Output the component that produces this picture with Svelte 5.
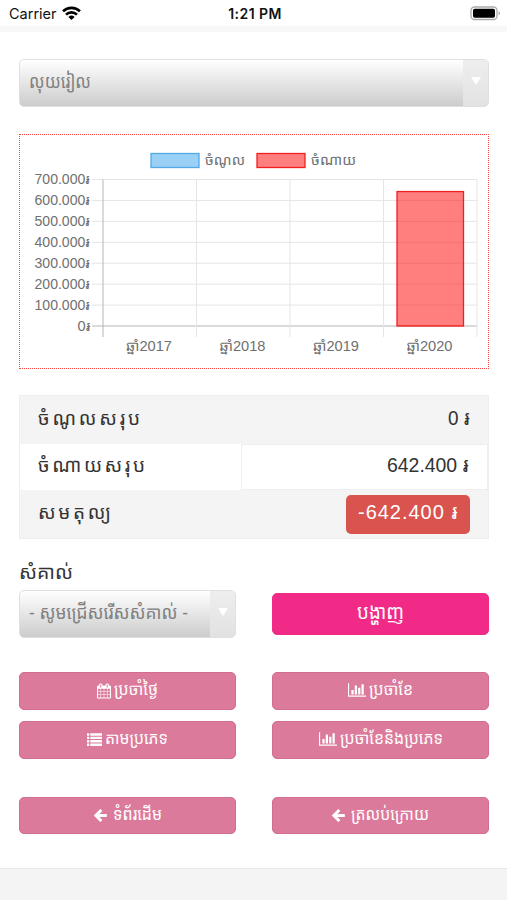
<script lang="ts">
	interface Action {
		icon: 'calendar' | 'chart' | 'list' | 'back';
		label: string;
		width: number;
	}

	const legend = [
		{ label: 'ចំណូល', level: 'income', x: 131, width: 40 },
		{ label: 'ចំណាយ', level: 'expense', x: 237, width: 45 }
	];

	const years = [2017, 2018, 2019, 2020];
	const ticks = ['700.000', '600.000', '500.000', '400.000', '300.000', '200.000', '100.000', '0'];
	const expenses = [0, 0, 0, 642400];

	const plot = { left: 83, top: 44.5, bottom: 191, step: 93.5 };
	const rowStep = (plot.bottom - plot.top) / 7;

	function barHeight(value: number) {
		return (value / 700000) * (plot.bottom - plot.top);
	}

	const actions: Action[] = [
		{ icon: 'calendar', label: 'ប្រចាំថ្ងៃ', width: 44 },
		{ icon: 'chart', label: 'ប្រចាំខែ', width: 44 },
		{ icon: 'list', label: 'តាមប្រភេទ', width: 63 },
		{ icon: 'chart', label: 'ប្រចាំខែនិងប្រភេទ', width: 103 }
	];

	const links: Action[] = [
		{ icon: 'back', label: 'ទំព័រដើម', width: 49 },
		{ icon: 'back', label: 'ត្រលប់ក្រោយ', width: 78 }
	];
</script>

{#snippet fitted(text: string, width: number, size: number, adjust: 'spacing' | 'spacingAndGlyphs' = 'spacingAndGlyphs')}
	<svg class="fitted" {width} height={size * 2}>
		<text y={size * 1.25} font-size={size} textLength={width} lengthAdjust={adjust}>{text}</text>
	</svg>
{/snippet}

{#snippet button(action: Action)}
	<button class="btn">
		{#if action.icon === 'calendar'}
			<svg class="icon" width="14" height="16" viewBox="0 0 1664 1792">
				<path
					fill="currentColor"
					d="M128 1664h288v-288H128zm352 0h320v-288H480zm-352-352h288V992H128zm352 0h320V992H480zM128 928h288V640H128zm736 736h320v-288H864zM480 928h320V640H480zm768 736h288v-288h-288zm-384-352h320V992H864zM512 448V160q0-13-9.500-22.500T480 128h-64q-13 0-22.500 9.500T384 160v288q0 13 9.500 22.500T416 480h64q13 0 22.500-9.500T512 448zm736 864h288V992h-288zM864 928h320V640H864zm384 0h288V640h-288zm32-480V160q0-13-9.500-22.500T1248 128h-64q-13 0-22.500 9.500T1152 160v288q0 13 9.500 22.500t22.500 9.500h64q13 0 22.500-9.500t9.500-22.500zm384-64v1280q0 52-38 90t-90 38H128q-52 0-90-38t-38-90V384q0-52 38-90t90-38h128v-96q0-66 47-113T416 0h64q66 0 113 47t47 113v96h384v-96q0-66 47-113t113-47h64q66 0 113 47t47 113v96h128q52 0 90 38t38 90z"
				/>
			</svg>
		{:else if action.icon === 'chart'}
			<svg class="icon" width="18" height="15" viewBox="0 0 2048 1664">
				<path
					fill="currentColor"
					d="M640 768v512H384V768zm384-512v1024H768V256zm1024 1152v128H0V0h128v1408zm-640-896v768h-256V512zm384-384v1152h-256V128z"
				/>
			</svg>
		{:else if action.icon === 'list'}
			<svg class="icon" width="15" height="13" viewBox="0 0 15 13">
				<path
					fill="currentColor"
					d="M0 .3h2.300v2.400H0zM3.300.3H15v2.400H3.300zM0 3.700h2.300v2.400H0zM3.300 3.700H15v2.400H3.300zM0 7.100h2.300v2.400H0zM3.300 7.100H15v2.400H3.300zM0 10.500h2.300v2.400H0zM3.300 10.500H15v2.400H3.300z"
				/>
			</svg>
		{:else}
			<svg class="icon back" width="13" height="13" viewBox="0 0 13 13">
				<path
					d="M7.400.900 1.800 6.500l5.600 5.600M2.200 6.500h10.600"
					fill="none"
					stroke="currentColor"
					stroke-width="2.900"
				/>
			</svg>
		{/if}
		{@render fitted(action.label, action.width, 16)}
	</button>
{/snippet}

<div class="screen">
	<header class="status">
		<div class="carrier">
			<span>Carrier</span>
			<svg width="19" height="15" viewBox="0 0 19 15">
				<g fill="none" stroke="#000" stroke-width="2.600">
					<path d="M1 5.300a12.200 12.200 0 0 1 17 0" />
					<path d="M4 8.600a8 8 0 0 1 11 0" />
				</g>
				<path d="M6.400 11a4.500 4.500 0 0 1 6.200 0L9.500 14z" />
			</svg>
		</div>
		<strong>1:21 PM</strong>
		<svg class="battery" width="31" height="15" viewBox="0 0 31 15">
			<rect x="1" y="1" width="26" height="12.500" rx="3.500" fill="#fff" stroke="#aaa" stroke-width="1.300" />
			<rect x="3" y="2.700" width="22" height="9" rx="1.800" />
			<path d="M28.700 5.300q2.400 2 0 4z" fill="#999" />
		</svg>
	</header>

	<main>
		<div class="select">
			<span class="value">{@render fitted('លុយរៀល', 62, 18)}</span>
			<span class="arrow"></span>
		</div>

		<section class="chart">
			<svg width="468" height="233">
				{#each legend as item}
					<rect class={item.level} x={item.x} y="18.500" width="48" height="14" />
					<text x={item.x + 54} y="30" textLength={item.width} lengthAdjust="spacingAndGlyphs">{item.label}</text>
				{/each}

				{#each ticks as tick, i}
					{@const y = plot.top + i * rowStep}
					<line class:axis={tick === '0'} x1="72" x2="457" y1={y} y2={y} />
					<text
						x={tick === '0' ? 57.500 : 14.500}
						y={y + 4.500}
						textLength={tick === '0' ? 13 : 55.500}
						lengthAdjust="spacingAndGlyphs">{tick}៛</text
					>
				{/each}

				{#each years as year, i}
					{@const x = plot.left + i * plot.step}
					<line class:axis={i === 0} x1={x} x2={x} y1={plot.top} y2="202" />
					<text x={x + 23} y="215.500" textLength="46" lengthAdjust="spacingAndGlyphs">ឆ្នាំ{year}</text>
					{#if expenses[i]}
						<rect
							class="expense"
							x={x + 13.500}
							y={plot.bottom - barHeight(expenses[i])}
							width="66.500"
							height={barHeight(expenses[i])}
						/>
					{/if}
				{/each}
				<line x1="457" x2="457" y1={plot.top} y2="202" />
			</svg>
		</section>

		<section class="totals">
			<div class="row shaded">
				<div class="name">{@render fitted('ចំណូលសរុប', 102, 19, 'spacing')}</div>
				<div class="amount">{@render fitted('0 ៛', 22, 20)}</div>
			</div>
			<div class="row">
				<div class="name">{@render fitted('ចំណាយសរុប', 107, 19, 'spacing')}</div>
				<div class="amount">{@render fitted('642.400 ៛', 82, 20)}</div>
			</div>
			<div class="row shaded">
				<div class="name">{@render fitted('សមតុល្យ', 73, 19, 'spacing')}</div>
				<div class="amount">
					<span class="badge">{@render fitted('-642.400 ៛', 100, 20, 'spacing')}</span>
				</div>
			</div>
		</section>

		<section class="filter">
			<div>
				<div class="label">{@render fitted('សំគាល់', 54, 19)}</div>
				<div class="select">
					<span class="value">{@render fitted('- សូមជ្រើសរើសសំគាល់ -', 159, 18)}</span>
					<span class="arrow"></span>
				</div>
			</div>
			<button class="btn show">{@render fitted('បង្ហាញ', 47, 20)}</button>
		</section>

		<section class="actions">
			{#each actions as action}
				{@render button(action)}
			{/each}
		</section>

		<section class="actions links">
			{#each links as action}
				{@render button(action)}
			{/each}
		</section>
	</main>

	<footer></footer>
</div>

<style>
	:global(body) {
		margin: 0;
		background: #fff;
	}

	.screen {
		display: flex;
		flex-direction: column;
		box-sizing: border-box;
		width: 507px;
		height: 900px;
		overflow: hidden;
		color: #333;
		font-family: 'Liberation Sans', 'Noto Sans', 'Noto Sans Khmer', 'DejaVu Sans', sans-serif;
	}

	svg {
		display: block;
		flex: none;
	}

	.fitted {
		overflow: visible;
		fill: currentColor;
	}

	.status {
		display: grid;
		grid-template-columns: 1fr auto 1fr;
		align-items: center;
		box-sizing: border-box;
		height: 32px;
		padding: 1px 6px 0 9px;
		border-bottom: 6px solid #f7f7f7;
		color: #111;
		font: 14.5px Inter, sans-serif;

		strong {
			font-size: 14px;
			font-weight: 600;
			letter-spacing: 0.45px;
		}
	}

	.carrier {
		display: flex;
		align-items: center;
		gap: 5px;
	}

	.battery {
		justify-self: end;
	}

	main {
		flex: 1;
		padding: 27px 18px 0 19px;
	}

	.select {
		display: flex;
		box-sizing: border-box;
		height: 48px;
		border: 1px solid #e0e0e0;
		border-radius: 5px;
		overflow: hidden;
		background: linear-gradient(#fff, #ccc);
		color: #808080;

		.value {
			display: flex;
			flex: 1;
			align-items: center;
			padding-left: 9px;
		}

		.arrow {
			display: flex;
			align-items: center;
			justify-content: center;
			width: 25px;
			background: linear-gradient(#eee, #e2e2e2);

			&::before {
				content: '';
				margin-top: -5px;
				border: 5px solid transparent;
				border-top: 8px solid #fff;
				border-bottom: 0;
			}
		}
	}

	.chart {
		box-sizing: border-box;
		height: 235px;
		margin-top: 27px;
		border: 1px dotted #f44;

		text {
			fill: #707070;
			font-size: 14px;
		}

		line {
			stroke: #e5e5e5;
			stroke-width: 1;
		}

		.axis {
			stroke: #b5b5b5;
		}

		.income {
			fill: #9ad0f5;
			stroke: #50aae8;
			stroke-width: 1.3;
		}

		.expense {
			fill: rgba(255, 0, 0, 0.5);
			stroke: #f02020;
			stroke-width: 1.3;
		}
	}

	.totals {
		box-sizing: border-box;
		height: 144px;
		margin-top: 26px;
		border: 1px solid #eee;
	}

	.row {
		display: flex;
		box-sizing: border-box;
		height: 48px;

		&.shaded {
			background: #f4f4f4;
		}

		&:nth-child(2) {
			height: 46px;

			.amount {
				border: 1px solid #eee;
			}
		}
	}

	.name,
	.amount {
		display: flex;
		flex: 1;
		align-items: center;
		box-sizing: border-box;
	}

	.name {
		flex: none;
		width: 221px;
		padding-left: 18px;
		-webkit-text-stroke: 0.5px;
	}

	.amount {
		justify-content: flex-end;
		padding-right: 18px;
	}

	.badge {
		display: flex;
		align-items: center;
		justify-content: center;
		width: 124px;
		height: 39px;
		border-radius: 5px;
		background: #d9534f;
		color: #fff;
		-webkit-text-stroke: 0.5px;
	}

	.filter,
	.actions {
		display: grid;
		grid-template-columns: 217px 217px;
		column-gap: 36px;
	}

	.filter {
		align-items: end;
		margin-top: 14px;
	}

	.label {
		display: flex;
		align-items: center;
		height: 37px;

		svg {
			margin-top: 5px;
		}
	}

	.btn {
		display: flex;
		align-items: center;
		justify-content: center;
		gap: 3px;
		box-sizing: border-box;
		height: 38px;
		padding: 0;
		border: 1px solid #d26c90;
		border-radius: 5px;
		background: #db7a9b;
		color: #fff;
		font-family: inherit;
		-webkit-text-stroke: 0.3px;
	}

	.icon {
		margin-top: -1px;
	}

	.back {
		margin-right: 3px;
	}

	.show {
		height: 42px;
		margin-bottom: 3px;
		border-color: #f02a86;
		background: #f02a86;
	}

	.actions {
		row-gap: 11px;
		margin-top: 34px;
	}

	.links {
		margin-top: 38px;

		.btn {
			height: 37px;
		}
	}

	footer {
		box-sizing: border-box;
		height: 32px;
		border-top: 1px solid #e7e7e7;
		background: #f4f4f4;
	}
</style>
